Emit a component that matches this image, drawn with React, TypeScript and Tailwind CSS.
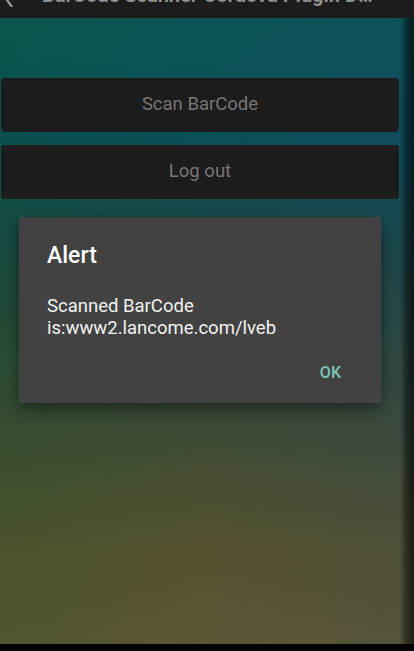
import React from 'react';

const FONT = 'font-["Roboto","Liberation_Sans",sans-serif]';

function TopBar(): React.ReactElement {
    // the title bar is mostly scrolled off the top edge
    return (
        <div className="h-[18px] overflow-hidden bg-[#1c1c1c]">
            <div className="-mt-[17px] flex h-[24px] items-center">
                <svg width="12" height="24" viewBox="0 0 12 24" className="ml-[3px] shrink-0">
                    <path d="M9 10 L4 17 L9 24" fill="none" stroke="#9a9a9a" strokeWidth="2.2" />
                </svg>
                <span className="ml-[27px] truncate pr-[40px] text-[20px] leading-[24px] font-bold text-[#8f8f8f]">
                    BarCode Scanner Cordova Plugin Demo
                </span>
            </div>
        </div>
    );
}

function ActionButton({ label }: { readonly label: string }): React.ReactElement {
    return (
        <button className="flex h-[54px] w-full items-center justify-center rounded-[4px] bg-[#1c1c1c] text-[18.5px] text-[#767676]">
            {label}
        </button>
    );
}

export default function App(): React.ReactElement {
    return (
        <div className={`${FONT} flex h-[651px] w-[414px] flex-col overflow-hidden bg-black`}>
            <TopBar />
            <main className="relative flex h-[626px] flex-col bg-[linear-gradient(180deg,#0b5456_0%,#0b4f58_20%,#194848_35%,#2a483c_50%,#3d4a35_65%,#55522e_85%,#5c5633_100%)]">
                {/* left side greener, right side bluer */}
                <div className="pointer-events-none absolute inset-0 bg-[linear-gradient(90deg,rgba(10,90,20,0.14)_0%,rgba(0,0,0,0)_50%,rgba(40,70,120,0.14)_100%)]" />
                <div className="pointer-events-none absolute inset-y-0 right-0 w-[14px] bg-[linear-gradient(90deg,rgba(0,0,0,0)_0%,rgba(0,0,0,0.4)_40%,rgba(0,0,0,0.65)_100%)]" />

                <div className="relative flex flex-col gap-[13px] pt-[60px] pl-[1px] pr-[15px]">
                    <ActionButton label="Scan BarCode" />
                    <ActionButton label="Log out" />
                </div>

                <div className="relative mt-[18px] ml-[19px] flex h-[186px] w-[362px] flex-col rounded-[2px] bg-[#424242] px-[28px] shadow-[0_6px_16px_rgba(0,0,0,0.45)]">
                    <h2 className="pt-[24px] text-[23px] leading-[30px] font-medium text-white">Alert</h2>
                    <p className="mt-[24px] text-[18.5px] leading-[22px] text-[#f2f2f2]">
                        Scanned BarCode
                        <br />
                        is:www2.lancome.com/lveb
                    </p>
                    <div className="mt-[24px] flex justify-end pr-[12px]">
                        <span className="text-[16px] leading-[20px] font-medium text-[#7ec5ba]">OK</span>
                    </div>
                </div>
            </main>
        </div>
    );
}
